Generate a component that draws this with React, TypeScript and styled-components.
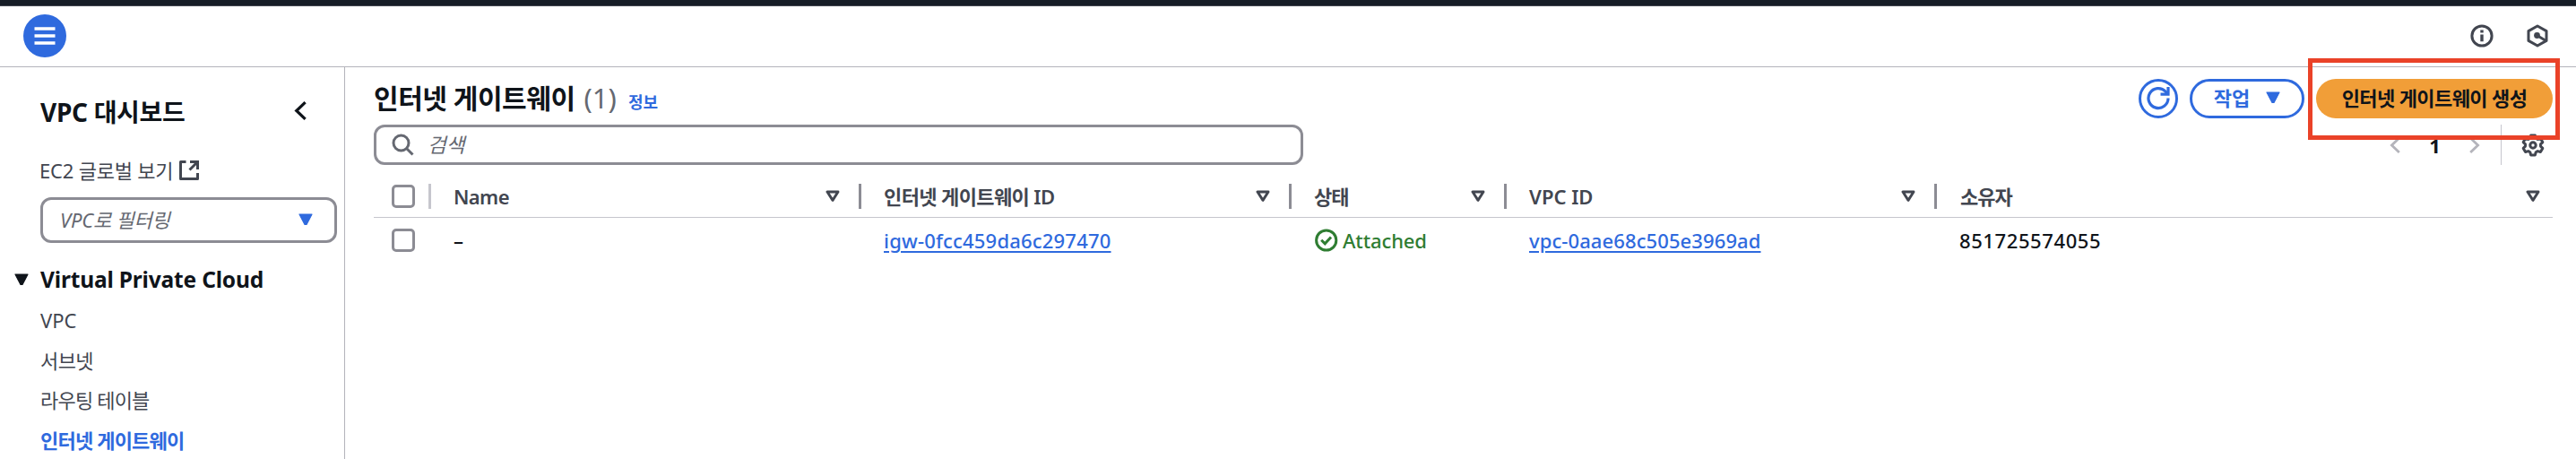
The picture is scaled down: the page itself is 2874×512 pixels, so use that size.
import React from 'react';
import styled, { createGlobalStyle } from 'styled-components';

const color = {
  blue: '#2f6ade',
  ink: '#0f141a',
  text: '#424650',
  muted: '#656871',
  border: '#8c8c94',
  line: '#c6c6cd',
  edge: '#b4b4bb',
  green: '#2f7d32',
  orange: '#f19e38',
};

const GlobalStyle = createGlobalStyle`
  * { box-sizing: border-box; }
  body {
    margin: 0;
    background: #fff;
    color: ${color.ink};
    font: 22px/32px "Noto Sans", "Noto Sans CJK KR", sans-serif;
    white-space: nowrap;
  }
  svg { display: block; flex: none; }
`;

const Page = styled.div`
  position: relative;
  display: flex;
  flex-direction: column;
  height: 512px;
  overflow: hidden;
`;

const TopBar = styled.div`
  flex: none;
  height: 7px;
  background: #161d26;
  border-bottom: 1px solid #424650;
`;

const Toolbar = styled.header`
  flex: none;
  display: flex;
  align-items: center;
  justify-content: space-between;
  height: 68px;
  padding: 0 31px 1px 26px;
  border-bottom: 1px solid ${color.edge};
`;

const MenuButton = styled.button`
  display: flex;
  align-items: center;
  justify-content: center;
  width: 48px;
  height: 48px;
  padding: 0;
  border: 0;
  border-radius: 50%;
  background: ${color.blue};
`;

const ToolIcons = styled.div`
  display: flex;
  gap: 37px;
`;

const Body = styled.div`
  flex: 1;
  display: flex;
  min-height: 0;
`;

const Sidebar = styled.nav`
  flex: none;
  width: 385px;
  padding-left: 45px;
  border-right: 1px solid ${color.edge};
`;

const SideHeader = styled.div`
  display: flex;
  align-items: center;
  justify-content: space-between;
  height: 36px;
  margin-top: 30px;
  padding-right: 42px;
`;

const SideTitle = styled.h2`
  margin: 0;
  padding-top: 3px;
  font-size: 28px;
  font-weight: 700;
  letter-spacing: -0.3px;
`;

const SideLink = styled.a<{ $active?: boolean; $gap?: number }>`
  display: flex;
  align-items: center;
  height: 44.6px;
  color: ${(p) => (p.$active ? color.blue : color.text)};
  font-weight: ${(p) => (p.$active ? 600 : 400)};
  letter-spacing: ${(p) => p.$gap ?? 0}px;
`;

const ExternalLink = styled(SideLink)`
  height: 32px;
  margin: 33px 0 14px -1px;
  gap: 6px;
`;

const Select = styled.div`
  display: flex;
  align-items: center;
  justify-content: space-between;
  width: 331px;
  height: 51px;
  padding: 0 24px 2px 19px;
  border: 3px solid ${color.border};
  border-radius: 12px;
  color: ${color.muted};
  font-style: italic;
  letter-spacing: -0.2px;
`;

const SideSection = styled.h3`
  display: flex;
  align-items: center;
  gap: 13px;
  height: 32px;
  margin: 25px 0 7px -29px;
  font-size: 24.5px;
  font-weight: 700;
  letter-spacing: -0.17px;
`;

const Main = styled.main`
  flex: 1;
  min-width: 0;
  padding: 13px 26px 0 32px;
`;

const Heading = styled.div`
  display: flex;
  align-items: center;
  justify-content: space-between;
  height: 44px;
`;

const Title = styled.h1`
  display: flex;
  align-items: baseline;
  margin: 0;
  padding-top: 3px;
  font-size: 30px;
  line-height: 44px;
  font-weight: 600;
  letter-spacing: -0.45px;
`;

const Counter = styled.span`
  margin-left: 10px;
  color: ${color.muted};
  font-size: 31px;
  font-weight: 400;
  letter-spacing: 0;
`;

const InfoLink = styled.a`
  margin-left: 13px;
  color: ${color.blue};
  font-size: 18px;
  font-weight: 600;
  letter-spacing: 0;
`;

const Actions = styled.div`
  display: flex;
  gap: 13px;
`;

const Button = styled.button<{ $primary?: boolean; $width: number }>`
  display: flex;
  align-items: center;
  justify-content: center;
  width: ${(p) => p.$width}px;
  height: 44px;
  padding: 0 0 2px;
  gap: 18px;
  border: ${(p) => (p.$primary ? '0' : `3px solid ${color.blue}`)};
  border-radius: 22px;
  background: ${(p) => (p.$primary ? color.orange : '#fff')};
  color: ${(p) => (p.$primary ? color.ink : color.blue)};
  font: inherit;
  font-weight: 600;
  letter-spacing: ${(p) => (p.$primary ? -0.6 : 0)}px;
`;

const Tools = styled.div`
  display: flex;
  align-items: center;
  justify-content: space-between;
  height: 45px;
  margin-top: 7px;
`;

const Search = styled.div`
  display: flex;
  align-items: center;
  gap: 15px;
  width: 1037px;
  height: 45px;
  padding-left: 17px;
  border: 3px solid ${color.border};
  border-radius: 12px;
  color: ${color.muted};
  font-style: italic;
  font-size: 22.5px;
`;

const Pager = styled.div`
  display: flex;
  align-items: center;
  height: 45px;
  padding-right: 9px;
`;

const PageNumber = styled.span`
  width: 77px;
  text-align: center;
  font-weight: 700;
`;

const PagerRule = styled.span`
  width: 1px;
  height: 45px;
  margin: 0 22px 0 23px;
  background: ${color.line};
`;

const Grid = styled.div`
  display: grid;
  grid-template-columns: 64px 480px 480px 240px 480px 1fr;
`;

const TableHead = styled(Grid)`
  height: 46px;
  margin-top: 13px;
  border-bottom: 1px solid ${color.line};
  color: ${color.text};
  font-weight: 600;
`;

const TableRow = styled(Grid)`
  height: 51px;
`;

const HeadCell = styled.div<{ $gap?: number; $last?: boolean }>`
  display: flex;
  align-items: center;
  justify-content: space-between;
  padding: 0 ${(p) => (p.$last ? 14 : 0)}px 2px ${(p) => (p.$last ? 26 : 25)}px;
  letter-spacing: ${(p) => p.$gap ?? 0}px;
`;

const CellEnd = styled.span`
  display: flex;
  align-items: center;
  gap: 21px;
`;

const Rule = styled.span<{ $light?: boolean }>`
  width: 3px;
  height: 28px;
  background: ${(p) => (p.$light ? color.line : color.border)};
`;

const CheckCell = styled.div`
  display: flex;
  align-items: center;
  justify-content: space-between;
  padding: 0 0 2px 20px;
`;

const Checkbox = styled.span`
  width: 26px;
  height: 26px;
  border: 3px solid ${color.border};
  border-radius: 5px;
`;

const Cell = styled.div<{ $gap?: number }>`
  display: flex;
  align-items: center;
  padding: 0 0 2px 25px;
  letter-spacing: ${(p) => p.$gap ?? 0}px;
  font-weight: 500;
`;

const Link = styled.a`
  color: ${color.blue};
  text-decoration: underline;
  text-decoration-thickness: 2px;
  text-underline-offset: 3px;
`;

const Status = styled.span`
  display: flex;
  align-items: center;
  gap: 5px;
  margin-left: 1px;
  color: ${color.green};
`;

const Highlight = styled.div`
  position: absolute;
  left: 2575px;
  top: 65px;
  width: 281px;
  height: 91px;
  border: 5px solid #ea4228;
`;

const Caret = ({ fill }: { fill: string }) => (
  <svg width="16" height="14" viewBox="0 0 16 14">
    <path d="M1 1h14L9 12.5H7z" fill={fill} stroke={fill} strokeWidth="1.2" strokeLinejoin="round" />
  </svg>
);

const FilterIcon = () => (
  <svg width="16" height="14" viewBox="0 0 16 14">
    <path d="M2 2h12L8 11.4z" fill="none" stroke={color.text} strokeWidth="2.9" strokeLinejoin="round" />
  </svg>
);

const Chevron = ({ right, stroke, w = 12, h = 18 }: { right?: boolean; stroke: string; w?: number; h?: number }) => (
  <svg width={w} height={h} viewBox="0 0 12 18" fill="none" stroke={stroke} strokeWidth="2.8">
    <path d={right ? 'M1.2 1l8.4 8-8.4 8' : 'M10.8 1L2.4 9l8.4 8'} />
  </svg>
);

const MenuIcon = () => (
  <svg width="24" height="20" viewBox="0 0 24 20" fill="none" stroke="#fff" strokeWidth="3.3">
    <path d="M.5 2h23M.5 10h23M.5 18h23" />
  </svg>
);

const InfoIcon = () => (
  <svg width="26" height="26" viewBox="0 0 26 26" fill="none" stroke={color.text} strokeWidth="3">
    <circle cx="13" cy="13" r="11.1" />
    <path d="M13 11.6v7.6M13 6.6v3" strokeWidth="3.4" />
  </svg>
);

const HexIcon = () => (
  <svg width="24" height="26" viewBox="0 0 24 26" fill="none" stroke={color.text} strokeWidth="3" strokeLinejoin="round">
    <path d="M12 2l10 5.6v10.8L12 24 2 18.4V7.6z" />
    <path d="M11.5 12.5l10 6" />
    <circle cx="11.5" cy="12.5" r="3.4" fill={color.text} stroke="none" />
  </svg>
);

const ExternalIcon = () => (
  <svg width="24" height="24" viewBox="0 0 24 24" fill="none" stroke={color.text} strokeWidth="3">
    <path d="M8.5 2.5h-6v19h19v-6.5" strokeLinejoin="round" />
    <path d="M13 2.5h8.5v8.5M21 3l-8.5 8.5" />
  </svg>
);

const RefreshIcon = () => (
  <svg width="28" height="28" viewBox="0 0 28 28" fill="none" stroke={color.blue} strokeWidth="3.2">
    <path d="M25 14.5A11 11 0 1 1 22 7l2 2.500" />
    <path d="M25 2v8.2h-8.5" />
  </svg>
);

const SearchIcon = () => (
  <svg width="25" height="25" viewBox="0 0 25 25" fill="none" stroke={color.muted} strokeWidth="3">
    <circle cx="10.5" cy="10.5" r="8.5" />
    <path d="M16.5 16.5l7 7" />
  </svg>
);

const StatusIcon = () => (
  <svg width="26" height="26" viewBox="0 0 26 26" fill="none" stroke={color.green} strokeWidth="3">
    <circle cx="12.7" cy="13" r="11.1" />
    <path d="M7.2 12.8l4 4 6.8-7.4" />
  </svg>
);

const GearIcon = () => (
  <svg width="26" height="26" viewBox="0 0 26 26" fill="none" stroke={color.text} strokeWidth="3" strokeLinejoin="round">
    <path d="M10.6 2h4.8l.8 3.3 2 1.1 3.2-.9 2.4 4.1-2.3 2.3v2.2l2.3 2.3-2.4 4.1-3.2-.9-2 1.1-.8 3.3h-4.8l-.8-3.3-2-1.1-3.2.9-2.4-4.1 2.3-2.3v-2.2L2.2 9.6l2.4-4.1 3.2.9 2-1.1z" />
    <circle cx="13" cy="13" r="3.2" />
  </svg>
);

export default function App() {
  return (
    <Page>
      <GlobalStyle />
      <TopBar />
      <Toolbar>
        <MenuButton aria-label="menu"><MenuIcon /></MenuButton>
        <ToolIcons>
          <InfoIcon />
          <HexIcon />
        </ToolIcons>
      </Toolbar>
      <Body>
        <Sidebar>
          <SideHeader>
            <SideTitle>VPC 대시보드</SideTitle>
            <Chevron stroke={color.ink} w={14} h={21} />
          </SideHeader>
          <ExternalLink $gap={-0.2}>
            EC2 글로벌 보기
            <ExternalIcon />
          </ExternalLink>
          <Select>
            VPC로 필터링
            <Caret fill={color.blue} />
          </Select>
          <SideSection>
            <Caret fill={color.ink} />
            Virtual Private Cloud
          </SideSection>
          <SideLink>VPC</SideLink>
          <SideLink $gap={-0.6}>서브넷</SideLink>
          <SideLink $gap={-0.8}>라우팅 테이블</SideLink>
          <SideLink $active $gap={-0.8}>인터넷 게이트웨이</SideLink>
        </Sidebar>
        <Main>
          <Heading>
            <Title>
              인터넷 게이트웨이
              <Counter>(1)</Counter>
              <InfoLink>정보</InfoLink>
            </Title>
            <Actions>
              <Button $width={44} aria-label="refresh"><RefreshIcon /></Button>
              <Button $width={128}>
                작업
                <Caret fill={color.blue} />
              </Button>
              <Button $primary $width={264}>인터넷 게이트웨이 생성</Button>
            </Actions>
          </Heading>
          <Tools>
            <Search>
              <SearchIcon />
              검색
            </Search>
            <Pager>
              <Chevron stroke={color.edge} />
              <PageNumber>1</PageNumber>
              <Chevron right stroke={color.edge} />
              <PagerRule />
              <GearIcon />
            </Pager>
          </Tools>
          <TableHead>
            <CheckCell><Checkbox /><Rule $light /></CheckCell>
            <HeadCell $gap={-0.6}>Name<CellEnd><FilterIcon /><Rule /></CellEnd></HeadCell>
            <HeadCell $gap={-0.6}>인터넷 게이트웨이 ID<CellEnd><FilterIcon /><Rule /></CellEnd></HeadCell>
            <HeadCell $gap={-1}>상태<CellEnd><FilterIcon /><Rule /></CellEnd></HeadCell>
            <HeadCell $gap={0}>VPC ID<CellEnd><FilterIcon /><Rule /></CellEnd></HeadCell>
            <HeadCell $gap={-1} $last>소유자<FilterIcon /></HeadCell>
          </TableHead>
          <TableRow>
            <CheckCell><Checkbox /></CheckCell>
            <Cell>–</Cell>
            <Cell $gap={0.2}><Link>igw-0fcc459da6c297470</Link></Cell>
            <Cell $gap={-0.1}><Status><StatusIcon />Attached</Status></Cell>
            <Cell $gap={0.1}><Link>vpc-0aae68c505e3969ad</Link></Cell>
            <Cell $gap={0.6}>851725574055</Cell>
          </TableRow>
        </Main>
      </Body>
      <Highlight />
    </Page>
  );
}
